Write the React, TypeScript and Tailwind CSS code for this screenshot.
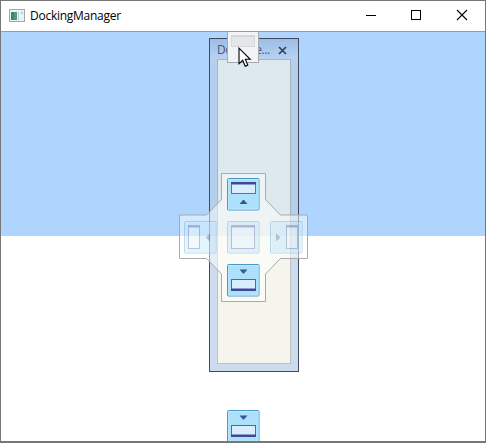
import React from "react";

type Direction = "up" | "down" | "left" | "right" | "center";

function DockGlyph({ direction }: { direction: Direction }) {
  return (
    <svg width="33" height="33" viewBox="0 0 33 33" className="block">
      <rect x="0.5" y="0.5" width="31.5" height="31.5" rx="1" fill="#ade0fb" stroke="#4c98c4" />
      <rect x="1.5" y="1.5" width="29.5" height="29.5" fill="none" stroke="#bce8ff" />
      {direction === "up" && (
        <g>
          <rect x="4.5" y="4.5" width="24" height="11" fill="#d9eefc" stroke="#5873b0" />
          <path d="M4 4h25v2.5H4z" fill="#3c4a99" />
          <path d="M12.5 26l3.5-4h1l3.5 4z" fill="#3b5792" />
        </g>
      )}
      {direction === "down" && (
        <g>
          <rect x="4.5" y="15.5" width="24" height="11" fill="#d9eefc" stroke="#5068aa" />
          <path d="M4 24.5h25V27H4z" fill="#3c4a99" />
          <path d="M12.5 5.5h8l-3.5 4h-1z" fill="#3b5792" />
        </g>
      )}
      {direction === "left" && (
        <g>
          <rect x="4.5" y="4.5" width="11" height="23" fill="#d9eefc" stroke="#4059a0" />
          <path d="M4 4h12v2.5H4z" fill="#3c4a99" />
          <path d="M26 12.5v8l-4-3.5v-1z" fill="#3b5792" />
        </g>
      )}
      {direction === "right" && (
        <g>
          <rect x="16.5" y="4.5" width="11" height="23" fill="#d9eefc" stroke="#4059a0" />
          <path d="M16 4h12v2.5H16z" fill="#3c4a99" />
          <path d="M6 12.5v8l4-3.5v-1z" fill="#3b5792" />
        </g>
      )}
      {direction === "center" && (
        <g>
          <rect x="4.5" y="4.5" width="23" height="23" fill="#d9eefc" stroke="#4059a0" />
          <path d="M4 4h24v2.5H4z" fill="#3c4a99" />
        </g>
      )}
    </svg>
  );
}

function TitleBar() {
  return (
    <header className="flex h-[29px] shrink-0 items-center bg-white">
      <svg width="16" height="14" viewBox="0 0 16 14" className="ml-2">
        <rect x="0.5" y="0.5" width="15" height="12" fill="#edf2f2" stroke="#a0a9ac" />
        <rect x="2" y="3" width="6" height="8" fill="#4b9a87" />
        <path d="M2 3h3v8H2z" fill="#3e827b" />
        <path d="M9 3h1v8H9zM12 3h2v2h-2z" fill="#c1cdcf" />
      </svg>
      <span className="ml-[5px] flex-1 text-[12px] leading-4 tracking-[-0.26px] text-black">
        DockingManager
      </span>
      <svg width="120" height="29" viewBox="0 0 120 29" fill="none" stroke="#000">
        <path d="M1 14.5h10" />
        <rect x="46.5" y="9.5" width="9" height="9" />
        <path d="M92 9l10 10M102 9l-10 10" strokeWidth="1.1" />
      </svg>
    </header>
  );
}

function FloatingWindow() {
  return (
    <section className="absolute left-[208px] top-[6px] h-[334px] w-[90px]">
      <div className="flex h-full flex-col bg-[#b8cee5] px-2 pb-2 opacity-70">
        <div className="-mx-2 h-[21px] shrink-0 bg-linear-to-b from-[#92b2df] to-[#bdd3ed]" />
        <div className="flex-1 border border-[#a7a9a5] bg-[#f2f2e7]" />
      </div>
      <div className="absolute inset-0 border border-[#414b5b]">
        <div className="flex h-[22px] items-center justify-between pl-[7px] pr-[11px]">
          <span className="whitespace-nowrap text-[12px] leading-4 tracking-[-0.4px] text-[#465b77]">Docume...</span>
          <svg width="9" height="9" viewBox="0 0 9 9" className="shrink-0">
            <path d="M1 1l7 7M8 1L1 8" stroke="#344354" strokeWidth="1.7" />
          </svg>
        </div>
      </div>
    </section>
  );
}

function Compass() {
  return (
    <div className="absolute left-[178px] top-[141px] h-[129px] w-[129px]">
      <svg width="129" height="129" viewBox="0 0 129 129" className="absolute inset-0">
        <path
          d="M42.5.5h44v26l15 15.5h27v43.5h-27l-15 15.5v27.5h-44V101L27.5 85.5H.5V42h27l15-15.5z"
          fill="#fff"
          fillOpacity="0.48"
          stroke="#aaa9ab"
        />
      </svg>
      <div className="relative grid grid-cols-[33px_33px_33px] grid-rows-[33px_33px_33px] gap-[10px] pl-[5px] pt-[5px]">
        <div className="col-start-2"><DockGlyph direction="up" /></div>
        <div className="col-start-1 row-start-2 opacity-35"><DockGlyph direction="left" /></div>
        <div className="col-start-2 row-start-2 opacity-35"><DockGlyph direction="center" /></div>
        <div className="col-start-3 row-start-2 opacity-35"><DockGlyph direction="right" /></div>
        <div className="col-start-2 row-start-3"><DockGlyph direction="down" /></div>
      </div>
    </div>
  );
}

function TopTarget() {
  return (
    <div className="absolute left-[226px] top-0 h-[31px] w-8 border border-t-0 border-[#a5abb1] bg-[#f1f3f5]">
      <div className="mx-[3px] mt-[3px] h-3 border border-t-2 border-[#d5d7da] bg-[#e5e6e8]" />
    </div>
  );
}

function Pointer() {
  return (
    <svg width="14" height="21" viewBox="0 0 14 21" className="absolute left-[237px] top-[15px]">
      <path
        d="M1 1.2v15.6l3.7-3.5 2.5 5.9 2.6-1.1-2.5-5.8h4.9z"
        fill="#fff"
        stroke="#000"
        strokeWidth="1.1"
      />
    </svg>
  );
}

export default function App() {
  return (
    <div className="flex h-[443px] w-[486px] flex-col overflow-hidden border border-b-2 border-[#777777] bg-white font-['Open_Sans',sans-serif]">
      <TitleBar />
      <main className="relative mt-px flex-1 overflow-hidden border-t border-t-[#8b9fb5]">
        <div className="h-[204px] bg-[#afd5ff]" />
        <FloatingWindow />
        <Compass />
        <div className="absolute left-[226px] top-[378px]"><DockGlyph direction="down" /></div>
        <TopTarget />
        <Pointer />
      </main>
    </div>
  );
}
